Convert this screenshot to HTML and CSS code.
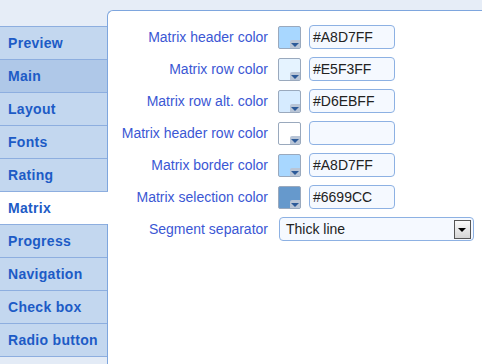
FILE: index.html
```html
<!DOCTYPE html>
<html>
<head>
<meta charset="utf-8">
<link rel="stylesheet" href="styles.css">
</head>
<body>
<div class="app">
  <nav class="tabs">
    <div class="tab">Preview</div>
    <div class="tab hover">Main</div>
    <div class="tab">Layout</div>
    <div class="tab">Fonts</div>
    <div class="tab">Rating</div>
    <div class="tab active">Matrix</div>
    <div class="tab">Progress</div>
    <div class="tab">Navigation</div>
    <div class="tab">Check box</div>
    <div class="tab">Radio button</div>
    <div class="tab rest"></div>
  </nav>
  <main class="panel">
    <div class="form">
      <label class="lbl">Matrix header color</label>
      <div class="field"><span class="swatch" style="background:#A8D7FF"><i class="drop"></i></span><span class="input">#A8D7FF</span></div>

      <label class="lbl">Matrix row color</label>
      <div class="field"><span class="swatch" style="background:#E5F3FF"><i class="drop"></i></span><span class="input">#E5F3FF</span></div>

      <label class="lbl">Matrix row alt. color</label>
      <div class="field"><span class="swatch" style="background:#D6EBFF"><i class="drop"></i></span><span class="input">#D6EBFF</span></div>

      <label class="lbl">Matrix header row color</label>
      <div class="field"><span class="swatch" style="background:#FFFFFF"><i class="drop"></i></span><span class="input"></span></div>

      <label class="lbl">Matrix border color</label>
      <div class="field"><span class="swatch" style="background:#A8D7FF"><i class="drop"></i></span><span class="input">#A8D7FF</span></div>

      <label class="lbl">Matrix selection color</label>
      <div class="field"><span class="swatch" style="background:#6699CC"><i class="drop"></i></span><span class="input">#6699CC</span></div>

      <label class="lbl">Segment separator</label>
      <div class="field"><div class="select"><span>Thick line</span><span class="sel-btn"></span></div></div>
    </div>
  </main>
</div>
</body>
</html>
```

FILE: styles.css
```css
html, body {
  margin: 0;
  padding: 0;
  height: 100%;
}
body {
  background: #E6EDF7;
  font-family: "Liberation Sans", Arial, sans-serif;
  overflow: hidden;
}
.app {
  display: flex;
  height: 364px;
}
.tabs {
  width: 107px;
  padding-top: 26px;
  display: flex;
  flex-direction: column;
  flex: none;
}
.tab {
  height: 32px;
  border-top: 1px solid #8DAEDF;
  background: #C3D7EF;
  color: #1D5BC6;
  font-weight: bold;
  font-size: 14px;
  line-height: 32px;
  padding-left: 8px;
  letter-spacing: 0.3px;
}
.tab.hover {
  background: #AFC8E8;
}
.tab.active {
  background: #FFFFFF;
  margin-right: -1px;
  position: relative;
  z-index: 1;
}
.tab.rest {
  flex: 1;
  background: #E3EBF6;
}
.panel {
  flex: 1;
  margin-top: 10px;
  background: #FFFFFF;
  border-left: 1px solid #7EA6DE;
  border-top: 1px solid #7EA6DE;
  border-top-left-radius: 6px;
}
.form {
  display: grid;
  grid-template-columns: 160px auto;
  column-gap: 10px;
  row-gap: 8px;
  padding-top: 14px;
  align-items: center;
}
.lbl {
  text-align: right;
  font-size: 14px;
  color: #3B57D4;
  white-space: nowrap;
}
.field {
  display: flex;
  align-items: center;
  gap: 8px;
  height: 24px;
}
.swatch {
  position: relative;
  width: 21px;
  height: 21px;
  border: 1px solid #9AA9BD;
  border-radius: 2px;
  box-sizing: content-box;
}
.drop {
  position: absolute;
  right: 0;
  bottom: 0;
  width: 10px;
  height: 8px;
  background: #B9C5D6;
  border-top-left-radius: 2px;
}
.drop::after {
  content: "";
  position: absolute;
  left: 1px;
  top: 3px;
  border-left: 4px solid transparent;
  border-right: 4px solid transparent;
  border-top: 4px solid #2D5A98;
}
.input {
  width: 81px;
  height: 22px;
  border: 1px solid #8DB1E3;
  border-radius: 4px;
  background: #F5F9FF;
  padding-left: 3px;
  font-size: 14px;
  line-height: 22px;
  color: #222;
}
.select {
  width: 185px;
  height: 22px;
  margin-left: 1px;
  border: 1px solid #8DB1E3;
  border-radius: 4px;
  background: #F5F9FF;
  display: flex;
  align-items: center;
  justify-content: space-between;
  padding-left: 6px;
  padding-right: 2px;
  font-size: 14px;
  color: #222;
  box-sizing: content-box;
}
.select span:first-child {
  flex: 1;
}
.sel-btn {
  position: relative;
  width: 15px;
  height: 17px;
  border: 1px solid #555;
  background: linear-gradient(#FAFAFA, #D6D6D6);
}
.sel-btn::after {
  content: "";
  position: absolute;
  left: 3px;
  top: 7px;
  border-left: 4px solid transparent;
  border-right: 4px solid transparent;
  border-top: 4px solid #000;
}
```
